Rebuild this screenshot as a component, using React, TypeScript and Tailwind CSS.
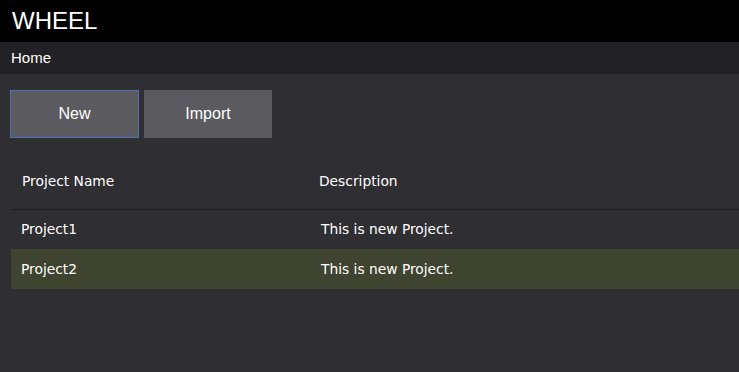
const projects = [
  { name: "Project1", description: "This is new Project." },
  { name: "Project2", description: "This is new Project." },
];

export default function App() {
  return (
    <div className="min-h-screen w-full bg-[#2f2e33] text-white">
      <header className="flex h-[42px] items-center bg-black px-3 font-['Liberation_Sans',Arial,sans-serif] text-[24px] leading-none">
        WHEEL
      </header>
      <nav className="flex h-[32px] items-center bg-[#222226] px-[11px] font-['Liberation_Sans',Arial,sans-serif] text-[15px]">
        Home
      </nav>

      <main className="px-[10px] pt-[16px]">
        <div className="flex gap-[5px] font-['Liberation_Sans',Arial,sans-serif] text-[16px]">
          <button className="h-[48px] w-[129px] border border-[#4a72b5] bg-[#5b5a5e]">
            New
          </button>
          <button className="h-[48px] w-[128px] bg-[#5b5a5e]">Import</button>
        </div>

        <table className="mt-[16px] ml-px w-[calc(100%+10px)] border-collapse font-['DejaVu_Sans',Verdana,sans-serif] text-[13.8px]">
          <thead>
            <tr className="h-[55px] border-b border-[#1f1e22]">
              <th className="w-[297px] pt-px pl-[11px] text-left font-normal">Project Name</th>
              <th className="pt-px pl-[11px] text-left font-normal">Description</th>
            </tr>
          </thead>
          <tbody>
            {projects.map((p, i) => (
              <tr key={p.name} className={i === 1 ? "h-[40px] bg-[#3f4430]" : "h-[40px]"}>
                <td className="pl-[10px]">{p.name}</td>
                <td className="pl-[13px]">{p.description}</td>
              </tr>
            ))}
          </tbody>
        </table>
      </main>
    </div>
  );
}
